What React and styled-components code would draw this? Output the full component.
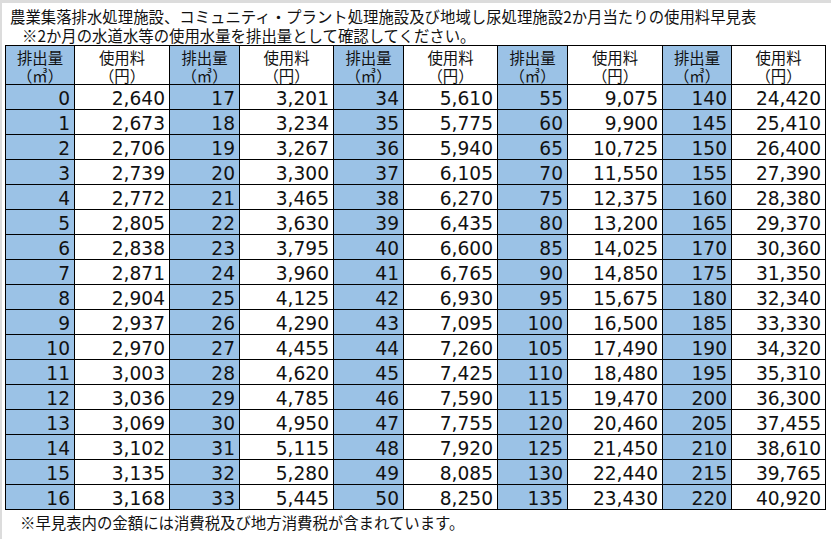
import React from 'react'
import styled, { createGlobalStyle } from 'styled-components'

const GlobalStyle = createGlobalStyle`
  html, body {
    margin: 0;
    padding: 0;
    background: #ffffff;
  }
`

const Page = styled.div`
  width: 831px;
  height: 539px;
  box-sizing: border-box;
  border-top: 3px solid #dcdcdc;
  border-left: 2px solid #dcdcdc;
  padding: 3px 0 0 3px;
  font-family: "Noto Sans CJK JP", "Noto Sans", sans-serif;
  color: #111;
  overflow: hidden;
`

const Title = styled.div`
  font-size: 15.4px;
  line-height: 20px;
  padding-left: 5px;
  white-space: nowrap;
`

const Note = styled.div`
  font-size: 15.4px;
  line-height: 19px;
  padding-left: ${p => p.$indent}px;
  padding-top: ${p => p.$top || 0}px;
  white-space: nowrap;
`

const Table = styled.table`
  border-collapse: collapse;
  table-layout: fixed;
  width: 821px;
  border: 1.5px solid #000;
`

const HeadCell = styled.th`
  height: 37px;
  padding: 2px 0 0 0;
  box-sizing: border-box;
  border: 1px solid #000;
  background: ${p => (p.$blue ? '#9bc2e6' : '#ffffff')};
  font-weight: normal;
  font-size: 15.4px;
  line-height: 18px;
  text-align: center;
  vertical-align: middle;
`

const Cell = styled.td`
  height: 24px;
  padding: 3px 4px 0 0;
  box-sizing: border-box;
  border: 1px solid #000;
  background: ${p => (p.$blue ? '#9bc2e6' : '#ffffff')};
  font-family: "DejaVu Sans", "Liberation Sans", sans-serif;
  font-size: 18.6px;
  line-height: 21px;
  text-align: right;
  white-space: nowrap;
`

const widths = [69, 95, 70, 94, 70, 94, 70, 95, 69, 94]

const range = (start, step) => Array.from({ length: 17 }, (_, i) => start + i * step)

const groups = [
  { vol: range(0, 1), fee: range(2640, 33) },
  {
    vol: range(17, 1),
    fee: [3201, 3234, 3267, 3300, 3465, 3630, 3795, 3960, 4125, 4290,
      4455, 4620, 4785, 4950, 5115, 5280, 5445],
  },
  { vol: range(34, 1), fee: range(5610, 165) },
  {
    vol: range(55, 5),
    fee: [9075, 9900, 10725, 11550, 12375, 13200, 14025, 14850, 15675, 16500,
      17490, 18480, 19470, 20460, 21450, 22440, 23430],
  },
  {
    vol: range(140, 5),
    fee: [24420, 25410, 26400, 27390, 28380, 29370, 30360, 31350, 32340, 33330,
      34320, 35310, 36300, 37455, 38610, 39765, 40920],
  },
]

const fmt = n => n.toLocaleString('en-US')

export default function App() {
  return (
    <>
      <GlobalStyle />
      <Page>
        <Title>
          農業集落排水処理施設、コミュニティ・プラント処理施設及び地域し尿処理施設2か月当たりの使用料早見表
        </Title>
        <Note $indent={17}>※2か月の水道水等の使用水量を排出量として確認してください。</Note>
        <Table>
          <colgroup>
            {widths.map((w, i) => (
              <col key={i} style={{ width: w }} />
            ))}
          </colgroup>
          <thead>
            <tr>
              {groups.map((g, i) => (
                <React.Fragment key={i}>
                  <HeadCell $blue>
                    排出量
                    <br />
                    （㎥）
                  </HeadCell>
                  <HeadCell>
                    使用料
                    <br />
                    （円）
                  </HeadCell>
                </React.Fragment>
              ))}
            </tr>
          </thead>
          <tbody>
            {groups[0].vol.map((_, r) => (
              <tr key={r}>
                {groups.map((g, i) => (
                  <React.Fragment key={i}>
                    <Cell $blue>{g.vol[r]}</Cell>
                    <Cell>{fmt(g.fee[r])}</Cell>
                  </React.Fragment>
                ))}
              </tr>
            ))}
          </tbody>
        </Table>
        <Note $indent={15} $top={3}>※早見表内の金額には消費税及び地方消費税が含まれています。</Note>
      </Page>
    </>
  )
}
